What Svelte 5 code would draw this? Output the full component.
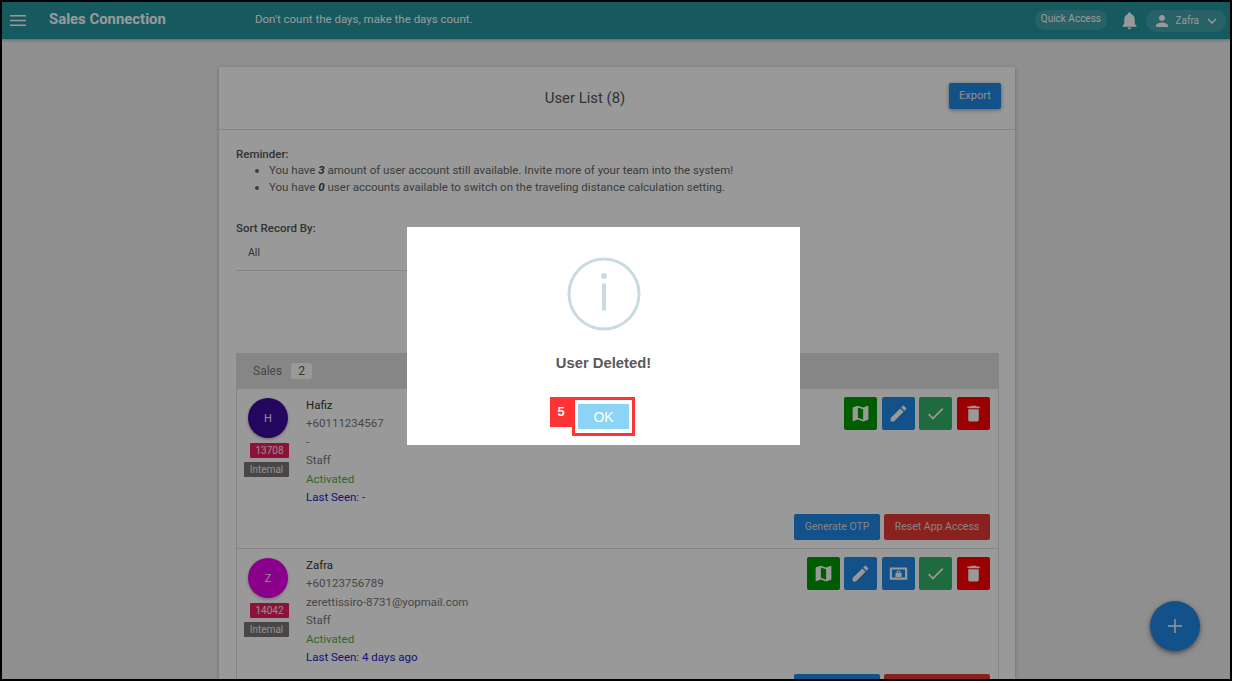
<script>
  const MAP = 'M20.5 3l-.16.03L15 5.1 9 3 3.36 4.9c-.21.07-.36.25-.36.48V20.5c0 .28.22.5.5.5l.16-.03L9 18.9l6 2.1 5.64-1.9c.21-.07.36-.25.36-.48V3.5c0-.28-.22-.5-.5-.5zM15 19l-6-2.11V5l6 2.11V19z';
  const EDIT = 'M3 17.25V21h3.75L17.81 9.94l-3.75-3.75L3 17.25zM20.71 7.04c.39-.39.39-1.02 0-1.41l-2.34-2.34c-.39-.39-1.02-.39-1.41 0l-1.83 1.83 3.75 3.75 1.83-1.83z';
  const CHECK = 'M9 16.17L4.83 12l-1.42 1.41L9 19 21 7l-1.41-1.41z';
  const TRASH = 'M6 19c0 1.1.9 2 2 2h8c1.1 0 2-.9 2-2V7H6v12zM19 4h-3.5l-1-1h-5l-1 1H5v2h14V4z';
  const SCREEN = 'M2 5h20v14H2zM4.500 7.500v9h15v-9zM8.500 11.500h7v4.500h-7zM9.800 11.500v-1c0-1.400 1-2 2.200-2s2.200.6 2.200 2v1H13v-1c0-.6-.4-.9-1-.9s-1 .3-1 .9v1z';

  const users = [
    {
      name: 'Hafiz', initial: 'H', color: '#3d0a9e', id: '13708', phone: '+60111234567', email: '-',
      seen: '-', actions: ['map', 'edit', 'check', 'trash']
    },
    {
      name: 'Zafra', initial: 'Z', color: '#e600e6', id: '14042', phone: '+60123756789', email: 'zerettissiro-8731@yopmail.com',
      seen: '4 days ago', actions: ['map', 'edit', 'screen', 'check', 'trash']
    }
  ];

  const ACTIONS = {
    map: { path: MAP, cls: 'green' },
    edit: { path: EDIT, cls: 'blue' },
    screen: { path: SCREEN, cls: 'blue' },
    check: { path: CHECK, cls: 'teal' },
    trash: { path: TRASH, cls: 'red' }
  };
</script>

<div class="frame">
  <header class="topbar">
    <svg class="burger" viewBox="0 0 16 11" width="16" height="11"><path d="M0 0h16v1.500H0zM0 4.750h16v1.500H0zM0 9.500h16V11H0z" /></svg>
    <span class="brand">Sales Connection</span>
    <span class="motto">Don't count the days, make the days count.</span>
    <span class="quick">Quick Access</span>
    <svg class="bell" viewBox="0 0 24 24" width="21" height="21"><path d="M12 22c1.100 0 2-.9 2-2h-4c0 1.100.9 2 2 2zm6-6v-5c0-3.070-1.640-5.640-4.500-6.320V4c0-.830-.670-1.500-1.500-1.500s-1.500.670-1.500 1.500v.680C7.630 5.360 6 7.920 6 11v5l-2 2v1h16v-1l-2-2z" /></svg>
    <span class="account">
      <svg viewBox="0 0 24 24" width="18" height="18"><path d="M12 12c2.210 0 4-1.790 4-4s-1.790-4-4-4-4 1.790-4 4 1.790 4 4 4zm0 2c-2.670 0-8 1.340-8 4v2h16v-2c0-2.660-5.330-4-8-4z" /></svg>
      <span class="who">Zafra</span>
      <svg viewBox="0 0 24 24" width="18" height="18"><path d="M7.410 8.590L12 13.170l4.590-4.580L18 10l-6 6-6-6z" /></svg>
    </span>
  </header>

  <main class="page">
    <section class="card">
      <div class="card-head">
        <h1>User List (8)</h1>
        <button class="export">Export</button>
      </div>
      <div class="card-body">
        <strong class="label">Reminder:</strong>
        <ul>
          <li>You have <b><i>3</i></b> amount of user account still available. Invite more of your team into the system!</li>
          <li>You have <b><i>0</i></b> user accounts available to switch on the traveling distance calculation setting.</li>
        </ul>
        <strong class="label sort">Sort Record By:</strong>
        <div class="select">All</div>
        <div class="group">
          <span>Sales</span>
          <span class="count">2</span>
        </div>
        {#each users as user}
          <div class="user">
            <div class="side">
              <div class="avatar" style="background: {user.color}">{user.initial}</div>
              <span class="tag id">{user.id}</span>
              <span class="tag kind">Internal</span>
            </div>
            <div class="info">
              <div class="name">{user.name}</div>
              <div>{user.phone}</div>
              <div>{user.email}</div>
              <div>Staff</div>
              <div class="active">Activated</div>
              <div class="seen">Last Seen: {user.seen}</div>
            </div>
            <div class="actions">
              <div class="icons">
                {#each user.actions as a}
                  <button class="icon {ACTIONS[a].cls}" aria-label={a}>
                    <svg viewBox="0 0 24 24" width="21" height="21"><path fill-rule="evenodd" d={ACTIONS[a].path} /></svg>
                  </button>
                {/each}
              </div>
              <div class="wide">
                <button class="otp">Generate OTP</button>
                <button class="reset">Reset App Access</button>
              </div>
            </div>
          </div>
        {/each}
      </div>
    </section>
  </main>

  <button class="fab" aria-label="Add">
    <svg viewBox="0 0 14 14" width="14" height="14"><path d="M6.300 0h1.400v6.300H14v1.400H7.700V14H6.300V7.700H0V6.300h6.300z" /></svg>
  </button>

  <div class="overlay"></div>
  <div class="dialog">
    <svg class="info-icon" viewBox="0 0 74 74" width="74" height="74">
      <circle cx="37" cy="37" r="35" />
      <rect x="35" y="26" width="4" height="28" rx="2" class="fill" />
      <circle cx="37" cy="19" r="3" class="fill" />
    </svg>
    <div class="msg">User Deleted!</div>
    <div class="ok-wrap">
      <span class="step">5</span>
      <span class="ok-ring"><button class="ok">OK</button></span>
    </div>
  </div>
</div>

<style>
  :global(body) {
    margin: 0;
    background: #fff;
  }

  .frame {
    position: relative;
    box-sizing: border-box;
    width: 1232px;
    height: 681px;
    border: 2px solid #000;
    overflow: hidden;
    background: #eee;
    font-family: Roboto, "Liberation Sans", sans-serif;
    font-size: 11.500px;
    color: #666;
    display: flex;
    flex-direction: column;
  }

  button {
    font-family: inherit;
    border: none;
    cursor: pointer;
    padding: 0;
  }

  .topbar {
    flex: none;
    height: 37px;
    background: #26979f;
    box-shadow: 0 1px 3px rgba(0, 0, 0, 0.3);
    display: flex;
    align-items: center;
    color: #fff;
  }

  .burger {
    margin-left: 8px;
    fill: #fff;
  }

  .brand {
    margin-left: 23px;
    font-size: 14.900px;
    font-weight: 700;
    width: 206px;
    margin-top: -3px;
  }

  .motto {
    font-size: 11.500px;
    flex: 1;
    margin-top: -3px;
  }

  .quick {
    background: rgba(255, 255, 255, 0.12);
    border-radius: 10px;
    font-size: 10px;
    padding: 0 6px;
    line-height: 18px;
    height: 20px;
    margin-top: -2px;
  }

  .bell {
    margin: 0 6px 0 12px;
    fill: #fff;
  }

  .account {
    display: flex;
    align-items: center;
    gap: 4.500px;
    height: 22px;
    background: rgba(255, 255, 255, 0.12);
    border-radius: 11px;
    font-size: 10px;
    padding: 0 5px 0 7px;
    margin-right: 4px;
  }

  .who {
    width: 23px;
  }

  .account svg {
    fill: #fff;
  }

  .page {
    flex: 1;
    min-height: 0;
    display: flex;
    padding: 28px 0 0 217px;
  }

  .card {
    width: 796px;
    background: #fff;
    box-shadow: 0 1px 4px rgba(0, 0, 0, 0.25);
    flex: none;
    align-self: flex-start;
  }

  .card-head {
    height: 62px;
    border-bottom: 1px solid #ddd;
    display: flex;
    align-items: center;
    justify-content: center;
    position: relative;
    padding-right: 64px;
  }

  .card-head h1 {
    margin: 0;
    font-size: 14.900px;
    font-weight: 400;
    color: #555;
  }

  .export {
    position: absolute;
    right: 14px;
    top: 16px;
    width: 52px;
    height: 26px;
    background: #1e88e5;
    color: #eee;
    font-size: 11px;
    border-radius: 2px;
    box-shadow: 0 1px 4px rgba(0, 0, 0, 0.4);
    padding-bottom: 2px;
  }

  .card-body {
    padding: 17px 16px 0 17px;
  }

  .label {
    display: block;
    font-weight: 500;
    line-height: 15px;
    color: #555;
  }

  ul {
    margin: 0;
    padding-left: 33px;
    line-height: 16.500px;
    color: #666;
  }

  li b {
    color: #444;
  }

  .sort {
    margin-top: 26px;
  }

  .select {
    margin-top: 9px;
    width: 340px;
    height: 25px;
    padding-left: 12px;
    font-size: 10.500px;
    line-height: 16px;
    color: #555;
    border-bottom: 1px solid #ddd;
  }

  .group {
    margin-top: 82px;
    height: 36px;
    background: #e0e0e0;
    display: flex;
    align-items: center;
    gap: 9px;
    padding-left: 17px;
    font-size: 12px;
    color: #777;
  }

  .count {
    background: #fff;
    border-radius: 3px;
    padding: 0 7px;
    line-height: 16px;
    color: #555;
  }

  .user {
    box-sizing: border-box;
    height: 160px;
    display: flex;
    border-left: 1px solid #ddd;
    border-right: 1px solid #ddd;
    border-bottom: 1px solid #ddd;
    padding: 9px 8px 0 7px;
  }

  .side {
    width: 45px;
    display: flex;
    flex-direction: column;
    align-items: flex-end;
  }

  .avatar {
    width: 40px;
    height: 40px;
    border-radius: 50%;
    color: #eee;
    font-size: 11px;
    display: flex;
    align-items: center;
    justify-content: center;
    box-shadow: 0 1px 3px rgba(0, 0, 0, 0.3);
    margin-right: 1px;
  }

  .tag {
    color: #eee;
    font-size: 10px;
    line-height: 15px;
    height: 15px;
    text-align: center;
    border-radius: 1px;
  }

  .tag.id {
    margin-top: 5px;
    width: 39px;
    background: #e91e63;
  }

  .tag.kind {
    margin-top: 4px;
    width: 45px;
    background: #777;
  }

  .info {
    margin-left: 17px;
    flex: 1;
    line-height: 18.400px;
    margin-top: -2px;
    color: #777;
  }

  .name {
    color: #333;
  }

  .active {
    color: #4caf50;
  }

  .seen {
    color: #2222cc;
  }

  .actions {
    display: flex;
    flex-direction: column;
    align-items: flex-end;
    margin-top: -1px;
  }

  .icons {
    display: flex;
    gap: 4.600px;
  }

  .icon {
    width: 33px;
    height: 33px;
    border-radius: 2px;
    display: flex;
    align-items: center;
    justify-content: center;
  }

  .icon svg {
    fill: #fff;
  }

  .green {
    background: #009900;
  }

  .blue {
    background: #1e88e5;
  }

  .teal {
    background: #33b36b;
  }

  .red {
    background: #ff0000;
  }

  .wide {
    margin-top: 84px;
    display: flex;
    gap: 4px;
  }

  .wide button {
    height: 26px;
    color: #ddd;
    font-size: 10.500px;
    border-radius: 2px;
    padding-bottom: 2px;
  }

  .otp {
    width: 86px;
    background: #1e88e5;
  }

  .reset {
    width: 106px;
    background: #e53935;
  }

  .fab {
    position: absolute;
    left: 1148px;
    top: 599px;
    width: 50px;
    height: 50px;
    border-radius: 50%;
    background: #1e88e5;
    box-shadow: 0 2px 5px rgba(0, 0, 0, 0.5);
    display: flex;
    align-items: center;
    justify-content: center;
  }

  .fab svg {
    fill: #fff;
  }

  .overlay {
    position: absolute;
    inset: 0;
    background: rgba(0, 0, 0, 0.4);
  }

  .dialog {
    position: absolute;
    left: 405px;
    top: 225px;
    width: 393px;
    height: 218px;
    background: #fff;
    display: flex;
    flex-direction: column;
    align-items: center;
    padding-top: 30px;
    box-sizing: border-box;
  }

  .info-icon circle {
    fill: none;
    stroke: #c9dae1;
    stroke-width: 3;
  }

  .info-icon .fill {
    fill: #c9dae1;
    stroke: none;
  }

  .msg {
    margin-top: 24px;
    font-family: "Liberation Sans", Arial, sans-serif;
    font-weight: 700;
    font-size: 14.800px;
    color: #595959;
  }

  .ok-wrap {
    position: relative;
    margin-top: 26px;
  }

  .ok-ring {
    display: block;
    border: 3px solid #f33;
    padding: 4px 3px;
  }

  .step {
    position: absolute;
    left: -22px;
    top: 0;
    width: 22px;
    height: 30px;
    background: #f33;
    color: #fff;
    font-family: "Liberation Sans", Arial, sans-serif;
    font-size: 13px;
    font-weight: 700;
    text-align: center;
    line-height: 30px;
  }

  .ok {
    display: block;
    width: 51px;
    height: 25px;
    background: #8cd4f5;
    color: #fff;
    font-family: "Liberation Sans", Arial, sans-serif;
    font-size: 14px;
  }
</style>
